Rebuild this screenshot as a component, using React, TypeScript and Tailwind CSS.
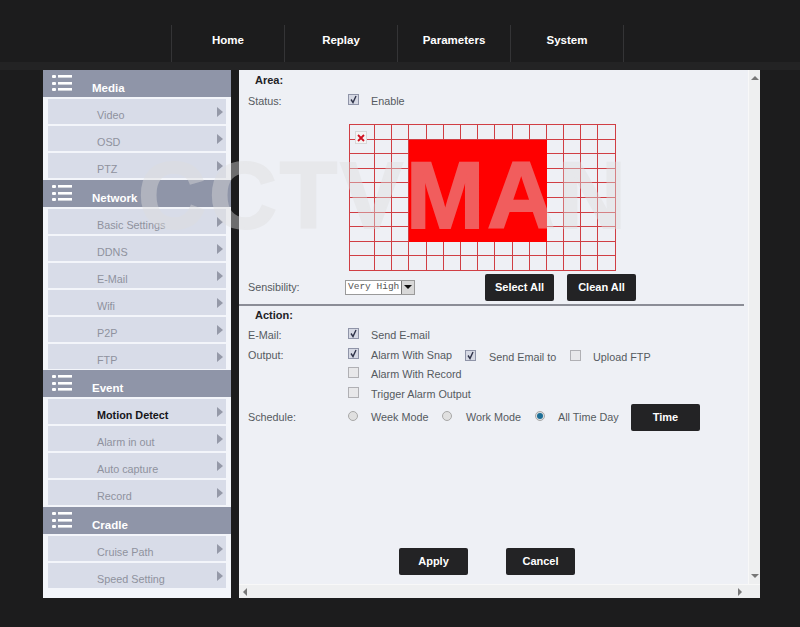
const groups = [
  { title: "Media", tight: false, items: ["Video", "OSD", "PTZ"] },
  { title: "Network", tight: true, items: ["Basic Settings", "DDNS", "E-Mail", "Wifi", "P2P", "FTP"] },
  { title: "Event", tight: false, items: ["Motion Detect", "Alarm in out", "Auto capture", "Record"] },
  { title: "Cradle", tight: false, items: ["Cruise Path", "Speed Setting"] },
];

function ListIcon() {
  return (
    <svg width="20" height="18" viewBox="0 0 20 18" className="absolute left-[9px] top-[4px]">
      <g fill="#ffffff">
        <rect x="0" y="1" width="4" height="3" rx="1" />
        <rect x="0" y="8" width="4" height="3" rx="1" />
        <rect x="0" y="14" width="4" height="3" rx="1" />
        <rect x="6" y="1" width="14" height="2.6" />
        <rect x="6" y="8" width="14" height="2.6" />
        <rect x="6" y="14" width="14" height="2.6" />
      </g>
    </svg>
  );
}

function Check({ on }: { on?: boolean }) {
  return (
    <span className={`-mt-[3px] flex h-[11px] w-[11px] items-center justify-center border ${on ? "border-[#8f94a8] bg-[#d6d9e4]" : "border-[#b0b0b4] bg-[#e8e8ea]"}`}>
      {on && (
        <svg width="9" height="9" viewBox="0 0 9 9">
          <path d="M2 4.5 L4 7.5 L7 1" fill="none" stroke="#30344a" strokeWidth="1.4" />
        </svg>
      )}
    </span>
  );
}

function Radio({ on }: { on?: boolean }) {
  return (
    <span className="-mt-[2px] flex h-[10px] w-[10px] items-center justify-center rounded-full border border-[#a8a8a8] bg-[#e0e0e0]">
      {on && <span className="h-[6px] w-[6px] rounded-full bg-[#1c6e96]" />}
    </span>
  );
}

function Btn({ children }: { children: string }) {
  return (
    <div className="flex h-[27px] w-[69px] items-center justify-center rounded-[2px] bg-[#232325] text-[11px] font-bold text-white">
      {children}
    </div>
  );
}

function Row({ h, label, children }: { h: string; label?: string; children?: React.ReactNode }) {
  return (
    <div className={`flex ${h} items-center pl-[9px]`}>
      <div className="w-[100px] shrink-0 text-[10.8px] text-[#555a60]">{label}</div>
      {children}
    </div>
  );
}

function Opt({ w, children }: { w: string; children: string }) {
  return <span className={`${w} shrink-0 whitespace-nowrap text-[10.8px] text-[#555a60]`}>{children}</span>;
}

const COLS = 15;
const ROWS = 10;
const cells = Array.from({ length: COLS * ROWS }, (_, i) => {
  const c = i % COLS;
  const r = Math.floor(i / COLS);
  return { key: i, red: c >= 3 && c <= 10 && r >= 1 && r <= 7 };
});

export default function App() {
  return (
    <div className="relative h-[627px] w-[800px] overflow-hidden bg-[#1c1c1d] font-['Liberation_Sans',Arial,sans-serif]">
      <nav className="flex h-[62px] items-end pl-[171px]">
        {["Home", "Replay", "Parameters", "System"].map((t) => (
          <div key={t} className="flex h-[37px] w-[113px] justify-center border-l border-[#343436] pt-[8px] text-[11.5px] font-bold leading-[14px] text-white">
            {t}
          </div>
        ))}
        <div className="h-[37px] border-l border-[#343436]" />
      </nav>
      <div className="h-[8px] bg-[#232324]" />

      <div className="ml-[43px] flex h-[528px] gap-[8px]">
        <aside className="flex w-[188px] flex-col bg-[#f3f5fa]">
          {groups.map((g) => (
            <div key={g.title} className={g.tight ? "-mb-[1px]" : ""}>
              <div className="relative h-[27px] bg-[#8f95a8] pl-[49px] pt-[11px] text-[11.5px] font-bold leading-[14px] text-white">
                <ListIcon />
                {g.title}
              </div>
              <div className="px-[5px] pt-[2px]">
                {g.items.map((it) => {
                  const active = it === "Motion Detect";
                  return (
                    <div key={it} className="relative mb-[2px] h-[25px] bg-[#d8dce8] pl-[49px] pt-[9px] text-[10.8px] leading-[14px]">
                      <span className={active ? "font-bold text-[#15151a]" : "text-[#8f929e]"}>{it}</span>
                      <span className="absolute right-[3px] top-[8px] h-0 w-0 border-y-[5px] border-l-[6px] border-y-transparent border-l-[#9599a8]" />
                    </div>
                  );
                })}
              </div>
            </div>
          ))}
        </aside>

        <main className="flex w-[521px] flex-col bg-[#eef0f5]">
          <div className="flex min-h-0 flex-1">
            <div className="flex w-[509px] flex-col">
              <div className="flex h-[20px] items-center pl-[16px] text-[11px] font-bold text-[#222226]">Area:</div>
              <Row h="h-[22px]" label="Status:">
                <span className="flex w-[23px] items-center"><Check on /></span>
                <Opt w="w-[60px]">Enable</Opt>
              </Row>
              <div className="relative ml-[110px] mt-[12px] w-[267px] border-l border-t border-[#d03e44]">
                <div className="grid grid-cols-[25px_repeat(14,17.2px)] grid-rows-[repeat(10,14.6px)]">
                  {cells.map((c) => (
                    <div key={c.key} className={`border-b border-r ${c.red ? "border-[#ff0000] bg-[#ff0000]" : "border-[#d03e44]"}`} />
                  ))}
                </div>
                <div className="absolute left-[5px] top-[6px] flex h-[13px] w-[12px] items-center justify-center border border-[#d8d8d8] bg-[#f4f4f4]">
                  <svg width="8" height="8" viewBox="0 0 8 8">
                    <path d="M1 1 L7 7 M7 1 L1 7" stroke="#d01020" strokeWidth="1.8" />
                  </svg>
                </div>
              </div>
              <Row h="h-[33px]" label="Sensibility:">
                <div className="-ml-[3px] flex h-[15px] w-[70px] items-center border border-[#9a9a9a] bg-white pl-[2px] font-['Liberation_Mono',monospace] text-[9.5px] text-[#555]">
                  <span className="flex-1 whitespace-nowrap">Very High</span>
                  <span className="flex h-[13px] w-[13px] items-center justify-center border-l border-[#777] bg-[#d8d8d8]">
                    <span className="h-0 w-0 border-x-[4px] border-t-[4px] border-x-transparent border-t-[#111]" />
                  </span>
                </div>
                <div className="ml-[70px] flex gap-[13px]">
                  <Btn>Select All</Btn>
                  <Btn>Clean All</Btn>
                </div>
              </Row>
              <div className="h-[2px] w-[505px] bg-[#8b8d96]" />
              <div className="flex h-[19px] items-center pl-[16px] text-[11px] font-bold text-[#222226]">Action:</div>
              <Row h="h-[20px]" label="E-Mail:">
                <span className="flex w-[23px] items-center"><Check on /></span>
                <Opt w="w-[90px]">Send E-mail</Opt>
              </Row>
              <Row h="h-[20px]" label="Output:">
                <span className="flex w-[23px] items-center"><Check on /></span>
                <Opt w="w-[94px]">Alarm With Snap</Opt>
                <span className="mt-[4px] flex items-center">
                  <span className="flex w-[24px] items-center"><Check on /></span>
                  <Opt w="w-[81px]">Send Email to</Opt>
                  <span className="flex w-[23px] items-center"><Check /></span>
                  <Opt w="w-[70px]">Upload FTP</Opt>
                </span>
              </Row>
              <Row h="h-[19px]">
                <span className="flex w-[23px] items-center"><Check /></span>
                <Opt w="w-[120px]">Alarm With Record</Opt>
              </Row>
              <Row h="h-[20px]">
                <span className="flex w-[23px] items-center"><Check /></span>
                <Opt w="w-[120px]">Trigger Alarm Output</Opt>
              </Row>
              <Row h="h-[27px]" label="Schedule:">
                <span className="flex w-[23px] items-center"><Radio /></span>
                <Opt w="w-[71px]">Week Mode</Opt>
                <span className="flex w-[24px] items-center"><Radio /></span>
                <Opt w="w-[69px]">Work Mode</Opt>
                <span className="flex w-[23px] items-center"><Radio on /></span>
                <Opt w="w-[73px]">All Time Day</Opt>
                <Btn>Time</Btn>
              </Row>
              <div className="ml-[160px] mt-[117px] flex gap-[38px]">
                <Btn>Apply</Btn>
                <Btn>Cancel</Btn>
              </div>
            </div>
            <div className="flex w-[12px] flex-col items-center justify-between border-l border-[#f8f8f8] bg-[#eeeff0] py-[6px]">
              <span className="h-0 w-0 border-x-[4px] border-b-[4px] border-x-transparent border-b-[#777]" />
              <span className="h-0 w-0 border-x-[4px] border-t-[4px] border-x-transparent border-t-[#777]" />
            </div>
          </div>
          <div className="flex h-[14px] shrink-0 items-center justify-between border-t border-[#f8f8f8] bg-[#eeeff0] pl-[4px] pr-[18px]">
            <span className="h-0 w-0 border-y-[4px] border-r-[4px] border-y-transparent border-r-[#777]" />
            <span className="h-0 w-0 border-y-[4px] border-l-[4px] border-y-transparent border-l-[#777]" />
          </div>
        </main>
      </div>

      <div className="pointer-events-none absolute left-[138px] top-[140px] whitespace-nowrap text-[94px] font-bold leading-[112px] tracking-[3px] text-[#dedede] opacity-[0.42] [-webkit-text-stroke:2px_#dedede]">
        CCTVMAN
      </div>
    </div>
  );
}
